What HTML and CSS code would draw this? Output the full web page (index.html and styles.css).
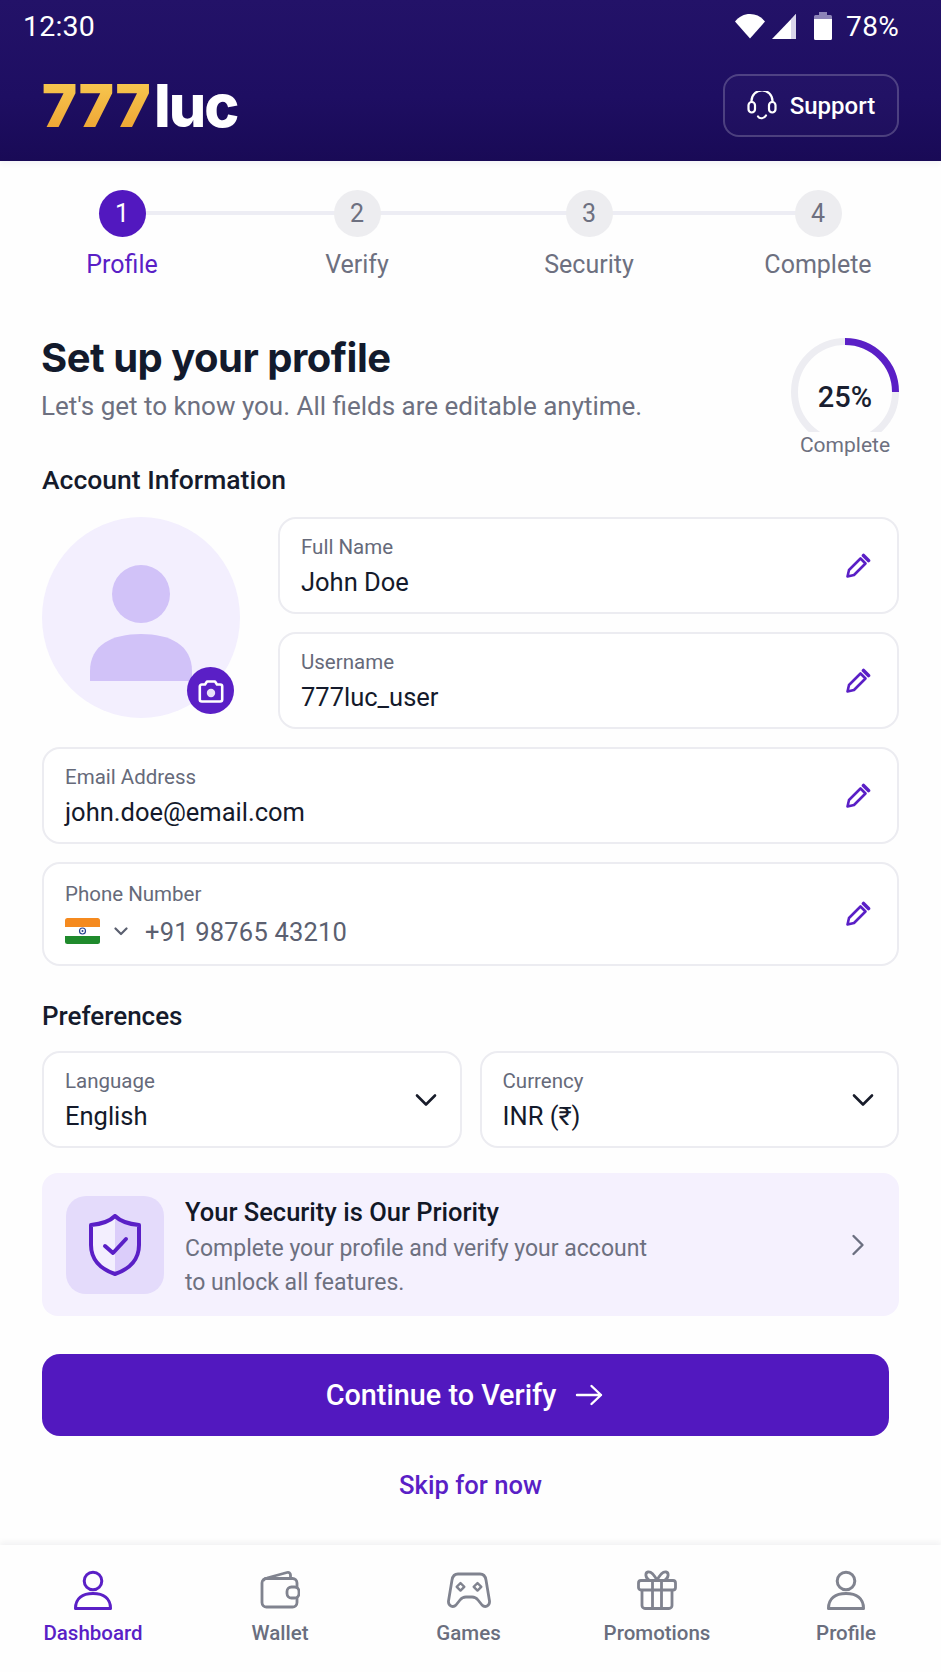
FILE: index.html
```html
<!DOCTYPE html>
<html lang="en">
<head>
<meta charset="utf-8">
<title>777luc profile setup</title>
<link rel="stylesheet" href="styles.css">
</head>
<body>
<svg class="defs" aria-hidden="true">
  <symbol id="pencil" viewBox="0 0 26 26">
    <path d="M2.500 23.500l1.500-6.500L15.500 5.500l5 5L9 22z" fill="none" stroke="#5a1fc6" stroke-width="2.600" stroke-linejoin="round"/>
    <path d="M18.500 2.500l5 5" fill="none" stroke="#5a1fc6" stroke-width="3.600" stroke-linecap="round"/>
  </symbol>
  <symbol id="person" viewBox="0 0 40 42">
    <circle cx="20" cy="11" r="8.800" fill="none" stroke-width="3"/>
    <path d="M2.500 38.500c0-10 7-15 17.500-15s17.500 5 17.500 15z" fill="none" stroke-width="3" stroke-linejoin="round"/>
  </symbol>
</svg>
<div class="app">
  <header class="top">
    <div class="status">
      <span class="time">12:30</span>
      <div class="status-right">
        <svg class="st-wifi" viewBox="0 0 32 26"><path d="M1 8.500C5 3.500 10 1 16 1s11 2.500 15 7.500L16 25.500z" fill="#fff"/></svg>
        <svg class="st-signal" viewBox="0 0 26 26"><path d="M25 1v25H1z" fill="#fff"/><path d="M20 6.500 25 1v25h-5z" fill="#d9d5ea"/></svg>
        <svg class="st-batt" viewBox="0 0 18 28"><path d="M5 0h8v3h3.500a1.500 1.500 0 0 1 1.500 1.500V8H0V4.500A1.500 1.500 0 0 1 1.500 3H5z" fill="#8d84b8"/><path d="M0 7h18v19.500a1.500 1.500 0 0 1-1.500 1.500h-15A1.500 1.500 0 0 1 0 26.500z" fill="#fff"/></svg>
        <span class="pct">78%</span>
      </div>
    </div>
    <div class="brand-row">
      <div class="logo"><span class="logo-num">777</span><span class="logo-txt">luc</span></div>
      <button class="support">
        <svg class="support-ic" viewBox="0 0 30 30" fill="none" stroke="#fff" stroke-width="2.200" stroke-linecap="round"><path d="M4.500 11v-1a10.500 10.500 0 0 1 21 0v1"/><rect x="1.500" y="11" width="6.500" height="10.500" rx="3.200"/><rect x="22" y="11" width="6.500" height="10.500" rx="3.200"/><path d="M11 25.500c1.500 2.500 6 2.500 8-1"/></svg>
        <span>Support</span>
      </button>
    </div>
  </header>

  <main class="main">
    <div class="stepper">
      <div class="step active"><div class="dot">1</div><div class="step-label">Profile</div></div>
      <div class="step"><div class="dot">2</div><div class="step-label">Verify</div></div>
      <div class="step"><div class="dot">3</div><div class="step-label">Security</div></div>
      <div class="step"><div class="dot">4</div><div class="step-label">Complete</div></div>
    </div>

    <section class="title-row">
      <div class="title-text">
        <h1>Set up your profile</h1>
        <p>Let's get to know you. All fields are editable anytime.</p>
      </div>
      <div class="ring-wrap">
        <svg class="ring" viewBox="0 0 108 108" fill="none"><circle cx="54" cy="54" r="50.500" stroke="#ededf2" stroke-width="7"/><path d="M54 3.500a50.500 50.500 0 0 1 50.500 50.500" stroke="#5a1fc6" stroke-width="7"/></svg>
        <div class="ring-num">25%</div>
        <div class="ring-label">Complete</div>
      </div>
    </section>

    <h2 class="sec sec-account">Account Information</h2>

    <div class="account">
      <div class="avatar">
        <svg class="avatar-person" viewBox="0 0 102 116"><circle cx="51" cy="29" r="29" fill="#d1c2f8"/><path d="M0 116V106C0 80 22 69 51 69s51 11 51 37v10z" fill="#d1c2f8"/></svg>
        <div class="cam">
          <svg viewBox="0 0 26 24" fill="none"><path d="M9 2.500h8l2 3h3.200a2 2 0 0 1 2 2v13a2 2 0 0 1-2 2H3.800a2 2 0 0 1-2-2v-13a2 2 0 0 1 2-2H7z" stroke="#fff" stroke-width="2.600" stroke-linejoin="round"/><circle cx="13" cy="14" r="4.200" fill="#e9e2fb"/></svg>
        </div>
      </div>
      <div class="account-fields">
        <div class="field"><div class="field-body"><div class="f-label">Full Name</div><div class="f-value">John Doe</div></div><svg class="pencil"><use href="#pencil"/></svg></div>
        <div class="field"><div class="field-body"><div class="f-label">Username</div><div class="f-value">777luc_user</div></div><svg class="pencil"><use href="#pencil"/></svg></div>
      </div>
    </div>

    <div class="field field-wide"><div class="field-body"><div class="f-label">Email Address</div><div class="f-value">john.doe@email.com</div></div><svg class="pencil"><use href="#pencil"/></svg></div>

    <div class="field field-wide field-phone">
      <div class="field-body">
        <div class="f-label">Phone Number</div>
        <div class="phone-line">
          <svg class="flag" viewBox="0 0 36 27"><defs><clipPath id="fc"><rect width="35" height="26" rx="2.500"/></clipPath></defs><g clip-path="url(#fc)"><rect width="35" height="9" fill="#f58a1f"/><rect y="9" width="35" height="9" fill="#fff"/><rect y="18" width="35" height="9" fill="#1f8a2c"/></g><circle cx="17.500" cy="13" r="3" fill="none" stroke="#27408f" stroke-width="1.200"/><circle cx="17.500" cy="13" r="1" fill="#27408f"/></svg>
          <svg class="mini-chev" viewBox="0 0 14 9" fill="none" stroke="#5b6070" stroke-width="2.200" stroke-linecap="round" stroke-linejoin="round"><path d="M1.500 1.500 7 7l5.500-5.500"/></svg>
          <span class="phone-num">+91 98765 43210</span>
        </div>
      </div>
      <svg class="pencil"><use href="#pencil"/></svg>
    </div>

    <h2 class="sec sec-pref">Preferences</h2>

    <div class="prefs">
      <div class="field"><div class="field-body"><div class="f-label">Language</div><div class="f-value">English</div></div><svg class="sel-chev" viewBox="0 0 22 14" fill="none" stroke="#181c2a" stroke-width="2.600" stroke-linecap="round" stroke-linejoin="round"><path d="M2 2.500l9 9 9-9"/></svg></div>
      <div class="field"><div class="field-body"><div class="f-label">Currency</div><div class="f-value">INR (₹)</div></div><svg class="sel-chev" viewBox="0 0 22 14" fill="none" stroke="#181c2a" stroke-width="2.600" stroke-linecap="round" stroke-linejoin="round"><path d="M2 2.500l9 9 9-9"/></svg></div>
    </div>

    <div class="notice">
      <div class="notice-tile">
        <svg viewBox="0 0 52 62" fill="none"><path d="M26 2c5 5 13 8 24 9v20c0 14-9 24-24 29z" fill="#dbcdfa"/><path d="M26 2C21 7 13 10 2 11v20c0 14 9 24 24 29z" fill="#f3effe"/><path d="M26 2c5 5 13 8 24 9v20c0 14-9 24-24 29C11 55 2 45 2 31V11c11-1 19-4 24-9z" stroke="#5a1fc6" stroke-width="4" stroke-linejoin="round"/><path d="M16 32l8 7 13-14" stroke="#5a1fc6" stroke-width="4" stroke-linecap="round" stroke-linejoin="round"/></svg>
      </div>
      <div class="notice-text">
        <div class="notice-title">Your Security is Our Priority</div>
        <div class="notice-sub">Complete your profile and verify your account<br>to unlock all features.</div>
      </div>
      <svg class="notice-chev" viewBox="0 0 14 22" fill="none" stroke="#6b6f80" stroke-width="2.400" stroke-linecap="round" stroke-linejoin="round"><path d="M2.500 2 11.500 11l-9 9"/></svg>
    </div>

    <button class="cta"><span>Continue to Verify</span><svg viewBox="0 0 28 22" fill="none" stroke="#fff" stroke-width="2.400" stroke-linecap="round" stroke-linejoin="round"><path d="M2 11h24M16.500 2l9.500 9-9.500 9"/></svg></button>
    <div class="skip">Skip for now</div>
  </main>

  <nav class="nav">
    <div class="tab tab-on">
      <svg><use href="#person"/></svg>
      <span>Dashboard</span>
    </div>
    <div class="tab">
      <svg viewBox="0 0 40 42" fill="none" stroke-width="2.800" stroke-linejoin="round"><rect x="2" y="8.500" width="35" height="28.500" rx="4.500"/><path d="M3 11c.5-1.500 2-2.500 4-3L27 2.500c2-.5 3.500.5 3.500 2.500v3.500"/><rect x="27" y="17" width="12" height="11" rx="4.500" fill="#fefefe"/></svg>
      <span>Wallet</span>
    </div>
    <div class="tab">
      <svg viewBox="0 0 44 42" fill="none" stroke-width="2.800" stroke-linejoin="round"><path d="M11 4H33C37 4 38.500 7 39 10L42.500 31C43 36 38 38 35 35L31 30C29 27.500 27 27 25 27H19C17 27 15 27.500 13 30L9 35C6 38 1 36 1.500 31L5 10C5.500 7 7 4 11 4z"/><path d="M13.500 13l3.800 3.800-3.800 3.800-3.800-3.800zM30.500 13l3.800 3.800-3.800 3.800-3.800-3.800z" stroke-width="2.400"/></svg>
      <span>Games</span>
    </div>
    <div class="tab">
      <svg viewBox="0 0 40 42" fill="none" stroke-width="2.800" stroke-linejoin="round"><rect x="1.500" y="10.500" width="37" height="9.500" rx="2.500"/><path d="M5 20v15.500a3 3 0 0 0 3 3h24a3 3 0 0 0 3-3V20"/><path d="M15.500 10.500v28M24.500 10.500v28"/><path d="M20 10.500c-2.500-5-6-9-9-8.500s-3 6 1.500 8.500M20 10.500c2.500-5 6-9 9-8.500s3 6-1.500 8.500"/></svg>
      <span>Promotions</span>
    </div>
    <div class="tab">
      <svg><use href="#person"/></svg>
      <span>Profile</span>
    </div>
  </nav>
</div>
</body>
</html>
```
FILE: styles.css
```css
* { box-sizing: border-box; }
html, body { margin: 0; padding: 0; }
body { background: #fff; font-family: Roboto, "Liberation Sans", sans-serif; color: #141a2b; }
.defs { display: none; }
.app { width: 941px; height: 1672px; overflow: hidden; display: flex; flex-direction: column; background: #fefefe; }

.top { height: 161px; background: linear-gradient(180deg, #231268 0%, #1e0e62 60%, #190a56 100%); color: #fff; padding: 0 42px 0 23px; flex: none; box-shadow: 0 3px 5px rgba(60, 60, 120, .05); position: relative; }
.status { height: 52px; display: flex; justify-content: space-between; align-items: center; }
.time { font-size: 28.5px; letter-spacing: .2px; }
.status-right { display: flex; align-items: center; }
.st-wifi { width: 32px; height: 26px; }
.st-signal { width: 26px; height: 26px; margin-left: 5px; }
.st-batt { width: 18px; height: 28px; margin-left: 17px; }
.pct { font-size: 28px; margin-left: 14px; letter-spacing: .3px; }
.brand-row { display: flex; justify-content: space-between; align-items: center; padding-left: 19px; height: 63px; margin-top: 22px; }
.logo { font-family: Inter, Roboto, sans-serif; font-size: 59px; line-height: 1; display: flex; }
.logo-num { font-weight: 900; letter-spacing: .5px; padding-right: 3px; background: linear-gradient(180deg, #f8cb52, #eda232); -webkit-background-clip: text; background-clip: text; color: transparent; }
.logo-txt { color: #fff; font-weight: 800; letter-spacing: -2px; }
.support { width: 176px; height: 63px; border: 2px solid rgba(255,255,255,.2); border-radius: 16px; background: rgba(255,255,255,.02); color: #fff; font: 500 24px Roboto, sans-serif; display: flex; align-items: center; justify-content: center; gap: 13px; padding: 0; }
.support-ic { width: 30px; height: 30px; }

.main { flex: 1; padding: 0 42px; min-height: 0; }

.stepper { position: relative; height: 113px; margin-top: 29px; display: grid; grid-template-columns: 235px 232px 229px 1fr; }
.stepper::before { content: ""; position: absolute; left: 80px; top: 21px; width: 696px; height: 4px; background: #ededf4; }
.step { position: relative; display: flex; flex-direction: column; align-items: center; width: 160px; }
.dot { width: 47px; height: 47px; border-radius: 50%; background: #ededf0; color: #6d7080; font-size: 25px; display: flex; align-items: center; justify-content: center; }
.step-label { margin-top: 13px; font-size: 25px; line-height: 30px; color: #6d7080; }
.active .dot { background: #5218bf; color: #fff; }
.active .step-label { color: #5a1fc6; }

.title-row { height: 158px; display: flex; justify-content: space-between; position: relative; }
.title-text { padding-top: 32px; margin-left: -1px; }
h1 { margin: 0; font-family: Inter, Roboto, sans-serif; font-size: 40px; line-height: 46px; font-weight: 700; letter-spacing: -.5px; color: #121a2c; }
.title-text p { margin: 10px 0 0; font-size: 26px; line-height: 30px; color: #6d7080; }
.ring-wrap { position: relative; width: 108px; height: 120px; margin-top: 35px; }
.ring { display: block; width: 108px; height: 108px; }
.ring-num { position: absolute; left: 0; right: 0; top: 42px; text-align: center; font-size: 29px; line-height: 34px; font-weight: 500; color: #1a1f30; }
.ring-label { position: absolute; left: -10px; right: -10px; top: 94px; text-align: center; font-size: 21px; line-height: 26px; color: #6d7080; background: #fefefe; width: fit-content; margin: 0 auto; }

.sec { margin: 0; font-size: 26px; line-height: 32px; font-weight: 500; color: #151b2c; }
.sec-account { margin-top: 3px; font-size: 26.5px; }
.sec-pref { margin-top: 34px; }

.account { margin-top: 21px; display: flex; gap: 38px; }
.avatar { position: relative; width: 198px; height: 201px; border-radius: 50%; background: #f3effe; flex: none; display: flex; justify-content: center; padding-top: 48px; }
.avatar-person { width: 102px; height: 116px; }
.cam { position: absolute; left: 145px; top: 150px; width: 47px; height: 47px; border-radius: 50%; background: #5a1fc6; display: flex; align-items: center; justify-content: center; }
.cam svg { width: 26px; height: 24px; }
.account-fields { flex: 1; display: flex; flex-direction: column; gap: 18px; }

.field { height: 97px; border: 2px solid #ececf1; border-radius: 18px; background: #fff; display: flex; align-items: center; justify-content: space-between; padding: 0 26px 0 21px; }
.field-body { min-width: 0; }
.f-label { font-size: 20.5px; line-height: 26px; color: #666a7a; }
.f-value { margin-top: 6px; font-size: 25.5px; line-height: 32px; color: #141a2b; }
.pencil { width: 26px; height: 26px; flex: none; }
.field-wide { margin-top: 18px; }
.field-phone { height: 104px; }
.phone-line { display: flex; align-items: center; margin-top: 9px; }
.flag { width: 36px; height: 27px; }
.mini-chev { width: 14px; height: 9px; margin-left: 13px; }
.phone-num { margin-left: 17px; font-size: 25.5px; line-height: 32px; color: #5b6070; letter-spacing: .2px; }

.prefs { margin-top: 19px; display: grid; grid-template-columns: 1fr 1fr; gap: 18px; }
.sel-chev { width: 22px; height: 14px; flex: none; }
.prefs .field { padding-right: 23px; }

.notice { margin-top: 25px; height: 143px; background: #f5f1fe; border-radius: 16px; display: flex; align-items: center; padding: 0 34px 0 24px; }
.notice-tile { width: 98px; height: 98px; border-radius: 20px; background: #e4dbfb; display: flex; align-items: center; justify-content: center; flex: none; }
.notice-tile svg { width: 52px; height: 62px; }
.notice-text { margin-left: 21px; flex: 1; padding-top: 7px; }
.notice-title { font-size: 25.5px; line-height: 32px; font-weight: 500; color: #121827; }
.notice-sub { margin-top: 4px; font-size: 23px; line-height: 34px; color: #6d7080; }
.notice-chev { width: 14px; height: 22px; flex: none; }

.cta { margin-top: 38px; width: 847px; height: 82px; border: 0; border-radius: 18px; background: #5218bf; color: #fff; font: 500 28.8px Roboto, sans-serif; display: flex; align-items: center; justify-content: center; gap: 19px; padding: 0 2px 0 0; }
.cta svg { width: 28px; height: 22px; }
.skip { margin-top: 32px; text-align: center; font-size: 25.6px; line-height: 34px; font-weight: 500; color: #5a1fc6; }

.nav { flex: none; height: 127px; background: #fefefe; box-shadow: 0 -3px 6px rgba(20,20,40,.05); display: grid; grid-template-columns: 186px 188px 189px 188px 190px; position: relative; }
.tab { display: flex; flex-direction: column; align-items: center; padding-top: 25px; color: #6a6e7e; font-size: 20.5px; line-height: 26px; font-weight: 500; }
.tab svg { width: 40px; height: 42px; stroke: #80838f; margin-bottom: 8px; }
.tab:nth-child(3) svg { width: 44px; }
.tab-on { color: #5a1fc6; }
.tab-on svg { stroke: #5a1fc6; }
```
